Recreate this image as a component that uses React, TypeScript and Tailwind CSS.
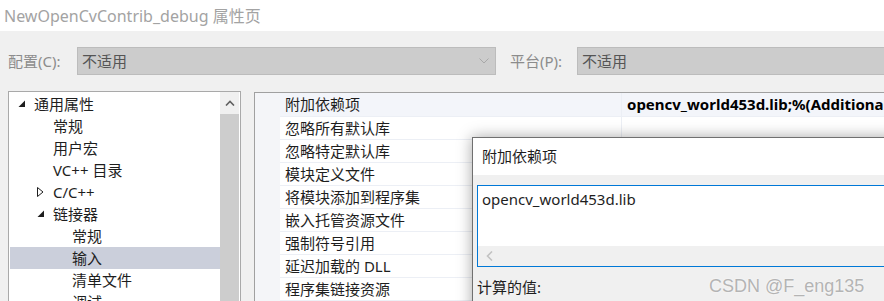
import React from 'react';

type TreeItem = { label: string; level: 0 | 1 | 2; toggle?: 'open' | 'closed'; selected?: boolean };

const treeItems: TreeItem[] = [
    { label: '通用属性', level: 0, toggle: 'open' },
    { label: '常规', level: 1 },
    { label: '用户宏', level: 1 },
    { label: 'VC++ 目录', level: 1 },
    { label: 'C/C++', level: 1, toggle: 'closed' },
    { label: '链接器', level: 1, toggle: 'open' },
    { label: '常规', level: 2 },
    { label: '输入', level: 2, selected: true },
    { label: '清单文件', level: 2 },
    { label: '调试', level: 2 },
];

const gridRows = [
    '附加依赖项',
    '忽略所有默认库',
    '忽略特定默认库',
    '模块定义文件',
    '将模块添加到程序集',
    '嵌入托管资源文件',
    '强制符号引用',
    '延迟加载的 DLL',
    '程序集链接资源',
];

const indentClass = ['pl-0', 'pl-[19px]', 'pl-[38px]']; // 19px per tree level

const font = "font-['Noto_Sans','Noto_Sans_CJK_SC',sans-serif]";

function Toggle({ kind }: { kind?: 'open' | 'closed' }) {
    if (kind === 'open') {
        return (
            <svg width="8" height="8" viewBox="0 0 8 8">
                <polygon points="7,0.5 7,7 0.5,7" fill="#1e1e1e" />
            </svg>
        );
    }
    if (kind === 'closed') {
        return (
            <svg width="7" height="10" viewBox="0 0 7 10">
                <polygon points="0.5,0.5 6,5 0.5,9.5" fill="none" stroke="#1e1e1e" strokeWidth="1" />
            </svg>
        );
    }
    return null;
}

function Combo({ width, chevron }: { width: string; chevron?: boolean }) {
    return (
        <div className={`${width} shrink-0 h-[28px] bg-[#cccccc] border border-[#bcbcbc] flex items-center pl-[4px] pr-[6px] text-[15px] text-[#555]`}>
            <span className="flex-1">不适用</span>
            {chevron && (
                <svg width="10" height="6" viewBox="0 0 10 6">
                    <polyline points="0.5,0.5 5,5 9.5,0.5" fill="none" stroke="#a8a8a8" strokeWidth="1" />
                </svg>
            )}
        </div>
    );
}

export default function App() {
    return (
        <div className={`relative w-[884px] h-[301px] overflow-hidden bg-[#f0f0f0] ${font}`}>
            {/* window title */}
            <div className="h-[31px] bg-white flex items-center pl-[4px] text-[16px] text-[#a3a3a3] whitespace-nowrap">
                NewOpenCvContrib_debug 属性页
            </div>

            {/* configuration / platform */}
            <div className="mt-[16px] pl-[8px] flex items-center whitespace-nowrap">
                <span className="w-[69px] shrink-0 text-[15px] text-[#8c8c8c]">配置(C):</span>
                <Combo width="w-[419px]" chevron />
                <span className="ml-[14px] w-[67px] shrink-0 text-[15px] text-[#8c8c8c]">平台(P):</span>
                <Combo width="w-[320px]" />
            </div>

            <div className="mt-[16px] pl-[8px] flex items-start">
                {/* tree */}
                <div className="w-[233px] h-[230px] shrink-0 bg-white border border-[#a9a9a9] flex">
                    <div className="flex-1 pt-[1px] pl-[1px]">
                        {treeItems.map((item, i) => (
                            <div
                                key={i}
                                className={`h-[22px] flex items-center text-[15px] text-[#1e1e1e] whitespace-nowrap ${indentClass[item.level]} ${item.selected ? 'bg-[#cbcfdb]' : ''}`}
                            >
                                <span className="w-[24px] shrink-0 pl-[8px] flex items-center">
                                    <Toggle kind={item.toggle} />
                                </span>
                                <span>{item.label}</span>
                            </div>
                        ))}
                    </div>
                    <div className="w-[19px] mr-[1px] flex flex-col bg-[#f0f0f0]">
                        <div className="h-[22px] flex items-center justify-center">
                            <svg width="10" height="6" viewBox="0 0 10 6">
                                <polyline points="1,5.5 5,1.5 9,5.5" fill="none" stroke="#606060" strokeWidth="1.6" />
                            </svg>
                        </div>
                        <div className="flex-1 bg-[#cdcdcd]" />
                    </div>
                </div>

                {/* property grid */}
                <div className="ml-[13px] mt-[1px] w-[640px] h-[230px] shrink-0 bg-white border-l border-t border-[#a0a0a0] flex overflow-hidden">
                    <div className="w-[25px] shrink-0 bg-[#f4f5f8]" />
                    <div className="flex-1 min-w-0">
                        {gridRows.map((name, i) => (
                            <div
                                key={i}
                                className={`${i === 0 ? 'h-[24px] bg-[#f3f5fa]' : 'h-[23px] bg-white'} flex border-b border-[#eceff5] text-[15px] text-[#1e1e1e] whitespace-nowrap`}
                            >
                                <div className="w-[342px] shrink-0 pl-[5px] flex items-center border-r border-[#eceff5]">{name}</div>
                                <div className="flex-1 min-w-0 pl-[5px] flex items-center font-bold text-black overflow-hidden">
                                    {i === 0 ? 'opencv_world453d.lib;%(AdditionalDependencies)' : ''}
                                </div>
                            </div>
                        ))}
                    </div>
                </div>
            </div>

            {/* additional dependencies dialog */}
            <div className="absolute left-[472px] top-[137px] w-[440px] h-[180px] border border-[#707070] bg-[#f0f0f0] shadow-[0_0_14px_rgba(0,0,0,0.35)]">
                <div className="h-[37px] bg-white flex items-center pl-[9px] text-[15px] text-[#1e1e1e]">附加依赖项</div>
                <div className="pl-[4px] pt-[10px]">
                    <div className="h-[82px] bg-white border border-[#0078d7] flex flex-col">
                        <div className="flex-1 pl-[4px] pt-[2px] text-[15px] text-[#1e1e1e]">opencv_world453d.lib</div>
                        <div className="h-[20px] bg-[#f0f0f0] flex items-center pl-[8px]">
                            <svg width="7" height="10" viewBox="0 0 7 10">
                                <polyline points="6,0.5 1.5,5 6,9.5" fill="none" stroke="#c2c2c2" strokeWidth="1.6" />
                            </svg>
                        </div>
                    </div>
                    <div className="mt-[9px] text-[15px] text-[#1e1e1e]">计算的值:</div>
                </div>
            </div>

            {/* watermark */}
            <div className="absolute left-[709px] top-[273px] text-[18px] text-[#b4b4b4] font-['Liberation_Sans',sans-serif] [text-shadow:0_0_2px_#ffffff]">
                CSDN @F_eng135
            </div>
        </div>
    );
}
